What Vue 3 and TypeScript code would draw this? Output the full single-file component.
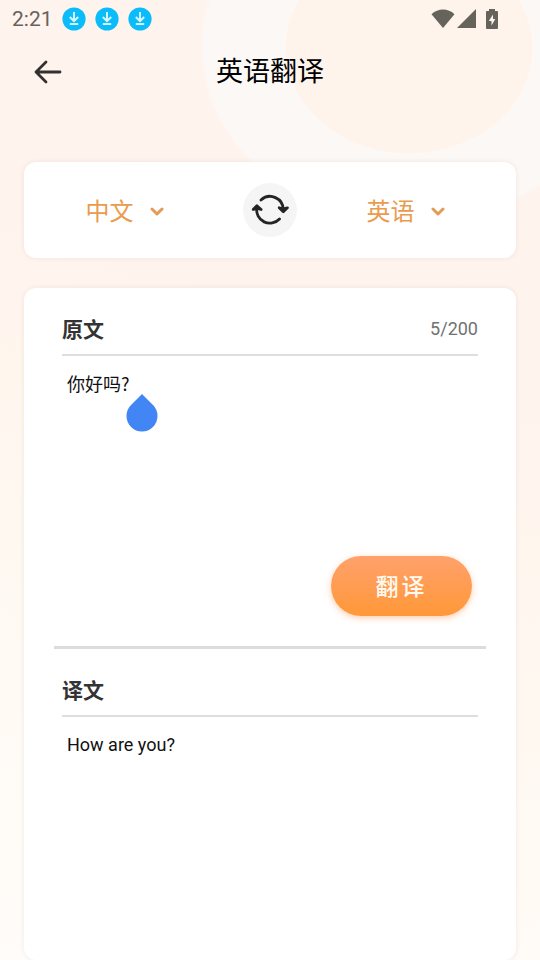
<script setup lang="ts">
import { computed, ref } from 'vue'

const languages = ['中文', '英语']
const from = ref('中文')
const to = ref('英语')
const source = ref('你好吗? ')
const result = ref('How are you?')
const limit = 200
const counter = computed(() => `${source.value.length}/${limit}`)

function swap(): void {
  const previous = from.value
  from.value = to.value
  to.value = previous
}
</script>

<template>
  <div class="page">
    <div class="status">
      <span class="clock">2:21</span>
      <svg v-for="n in 3" :key="n" class="download" viewBox="0 0 24 24" aria-hidden="true">
        <circle cx="12" cy="12" r="11.6" fill="#0bbcfb" />
        <path d="M12 5v9M7.800 10l4.200 4 4.200-4M7.800 17h8.400" fill="none" stroke="#d4f6ff" stroke-width="2" />
      </svg>
      <div class="signals">
        <svg width="24" height="20" viewBox="0 0 24 20" aria-hidden="true">
          <path d="M.5 5.2C7-1 17-1 23.500 5.200L12 19z" fill="#66635d" />
        </svg>
        <svg width="20" height="20" viewBox="0 0 20 20" aria-hidden="true">
          <path d="M19 0v19H0z" fill="#66635d" />
        </svg>
        <svg class="battery" width="12" height="20" viewBox="0 0 12 20" aria-hidden="true">
          <path d="M3 0h6v2h2q1 0 1 1v16q0 1-1 1H1q-1 0-1-1V3q0-1 1-1h2z" fill="#66635d" />
          <path d="M7 5.500L2.800 12h2.700v4.500L9.300 10H7z" fill="#fff6ee" />
        </svg>
      </div>
    </div>

    <header class="header">
      <button class="back" type="button" aria-label="返回">
        <svg width="28" height="24" viewBox="0 0 28 24" fill="none" stroke="#33302e" stroke-width="2.8" stroke-linecap="round" stroke-linejoin="round">
          <path d="M26 12H2M12 2L2 12l10 10" />
        </svg>
      </button>
      <h1>英语翻译</h1>
    </header>

    <main class="content">
      <section class="card languages">
        <div class="picker from">
          <select v-model="from" aria-label="源语言">
            <option v-for="name in languages" :key="name">{{ name }}</option>
          </select>
          <svg class="chevron" viewBox="0 0 14 10" aria-hidden="true"><path d="M2 2l5 5 5-5" /></svg>
        </div>
        <button class="swap" type="button" aria-label="交换语言" @click="swap">
          <svg width="38" height="32" viewBox="0 0 38 32" fill="none" stroke="#242424" stroke-width="2.800" stroke-linecap="round" stroke-linejoin="round">
            <path d="M10 6A13.200 13.200 0 0 1 32.200 16M28.500 25A13.200 13.200 0 0 1 5.800 14" />
            <path d="M28.200 13.800l4.100 4 4.100-4-4.100 1zM2.200 15.500l3.700-3.800 4.200 3.800-4.200-1z" fill="#242424" />
          </svg>
        </button>
        <div class="picker">
          <select v-model="to" aria-label="目标语言">
            <option v-for="name in languages" :key="name">{{ name }}</option>
          </select>
          <svg class="chevron" viewBox="0 0 14 10" aria-hidden="true"><path d="M2 2l5 5 5-5" /></svg>
        </div>
      </section>

      <section class="card editor">
        <div class="panel source">
          <div class="heading">
            <h2><label for="source">原文</label></h2>
            <span class="counter">{{ counter }}</span>
          </div>
          <div class="field">
            <textarea id="source" v-model="source" :maxlength="limit" spellcheck="false"></textarea>
            <svg class="handle" viewBox="0 0 32 38" aria-hidden="true">
              <path d="M16 0L27 11A15.500 15.500 0 1 1 5 11z" fill="#4285f4" />
            </svg>
          </div>
          <button class="translate" type="button">翻译</button>
        </div>
        <div class="panel">
          <div class="heading"><h2>译文</h2></div>
          <output class="result" for="source">{{ result }}</output>
        </div>
      </section>
    </main>
  </div>
</template>

<style>
body {
  margin: 0;
}
</style>

<style scoped>
.page {
  box-sizing: border-box;
  display: flex;
  flex-direction: column;
  min-height: 100vh;
  font-family: Roboto, "Noto Sans CJK SC", sans-serif;
  color: #111;
  background:
    radial-gradient(ellipse 124px 106px at 409px 48px, #fff4eb 99%, transparent 100%),
    radial-gradient(ellipse 209px 180px at 409px 46px, #fcf8f6 98%, transparent 100%),
    linear-gradient(200deg, #fff4ec 0%, #fff3ee 35%, #fff6ee 48%, #fffaf4 75%, #fffcf9 100%);
}

button,
select,
textarea {
  margin: 0;
  padding: 0;
  border: 0;
  background: none;
  font: inherit;
  color: inherit;
}

button,
select {
  cursor: pointer;
}

.status {
  display: flex;
  align-items: center;
  gap: 9px;
  height: 37px;
  padding: 0 42px 0 12px;
}

.clock {
  font-size: 21px;
  color: #66625e;
}

.download {
  width: 24px;
  height: 24px;
}

.signals {
  display: flex;
  align-items: center;
  gap: 2px;
  margin-left: auto;
}

.battery {
  margin-left: 7px;
}

.header {
  display: grid;
  grid-template-columns: 48px 1fr 48px;
  align-items: center;
  height: 70px;
  padding: 0 24px;
}

.back {
  display: flex;
  align-items: center;
  justify-content: center;
  height: 48px;
}

h1 {
  margin: 0;
  font-size: 27px;
  font-weight: 400;
  line-height: 40px;
  text-align: center;
  color: #000;
}

.content {
  display: flex;
  flex: 1;
  flex-direction: column;
  gap: 30px;
  padding: 55px 24px 0;
}

.card {
  border-radius: 12px;
  background: #fff;
  box-shadow: 0 0 5px rgba(120, 80, 50, 0.1);
}

.languages {
  display: grid;
  grid-template-columns: 1fr 54px 1fr;
  align-items: center;
  padding: 21px 0;
}

.picker {
  position: relative;
  display: flex;
  align-items: center;
  justify-self: center;
  margin-top: 3px;
}

.from {
  margin-right: 16px;
}

.picker select {
  width: 80px;
  height: 40px;
  appearance: none;
  font-size: 24px;
  color: #e99b4e;
}

.picker option {
  font-size: 18px;
}

.chevron {
  position: absolute;
  right: 2px;
  width: 14px;
  height: 10px;
  fill: none;
  stroke: #e39b58;
  stroke-width: 3;
  stroke-linecap: round;
  stroke-linejoin: round;
  pointer-events: none;
}

.swap {
  display: flex;
  align-items: center;
  justify-content: center;
  width: 54px;
  height: 54px;
  border-radius: 50%;
  background: #f5f5f5;
}

.editor {
  display: flex;
  flex: 1;
  flex-direction: column;
  padding: 0 30px;
}

.panel {
  display: flex;
  flex-direction: column;
  padding: 18px 8px 0;
}

.source {
  padding-bottom: 30px;
  border-bottom: 3px solid #dcdcdc;
}

.heading {
  display: flex;
  align-items: center;
  justify-content: space-between;
  height: 48px;
  border-bottom: 2px solid #dedede;
}

h2 {
  margin: 0;
  font-size: 21px;
  font-weight: 700;
  line-height: 30px;
  color: #333;
}

.counter {
  padding-bottom: 4px;
  font-size: 18px;
  color: #717171;
}

.field {
  position: relative;
  display: flex;
  height: 200px;
}

.field textarea {
  flex: 1;
  padding: 14px 5px;
  resize: none;
  outline: none;
  font-family: "Noto Sans CJK SC", sans-serif;
  font-size: 18px;
  line-height: 26px;
}

.handle {
  position: absolute;
  top: 38px;
  left: 64px;
  width: 32px;
  height: 38px;
}

.translate {
  align-self: flex-end;
  width: 141px;
  height: 60px;
  margin-right: 6px;
  padding-bottom: 3px;
  border-radius: 30px;
  background: linear-gradient(#ffa16c, #ff9838);
  box-shadow: 0 2px 6px rgba(255, 140, 70, 0.45);
  font-size: 23px;
  font-weight: 500;
  letter-spacing: 3px;
  color: #fffaf0;
}

.result {
  padding: 14px 5px;
  font-size: 18px;
  line-height: 27px;
}
</style>
